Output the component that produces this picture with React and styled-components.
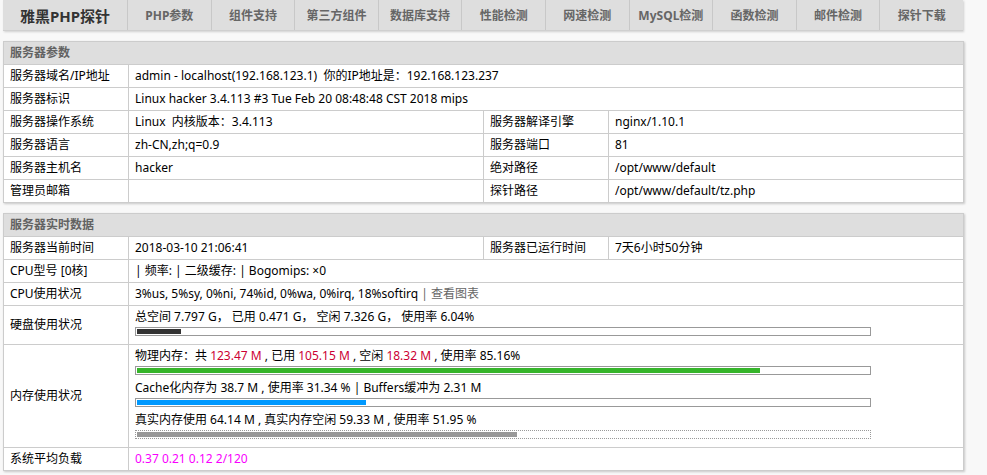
import React from 'react';
import styled, { createGlobalStyle } from 'styled-components';

const GlobalStyle = createGlobalStyle`
  html, body {
    margin: 0;
    padding: 0;
    background: #f8f8f8;
  }
  body {
    font-family: 'Noto Sans', 'Noto Sans CJK SC', sans-serif;
    font-size: 12px;
    color: #000;
  }
`;

const navItems = [
  'PHP参数',
  '组件支持',
  '第三方组件',
  '数据库支持',
  '性能检测',
  '网速检测',
  'MySQL检测',
  '函数检测',
  '邮件检测',
  '探针下载',
];

const Cols = () => (
  <colgroup>
    <Col $w="125px" />
    <Col $w="355px" />
    <Col $w="125px" />
    <Col $w="355px" />
  </colgroup>
);

const App = () => {
  return (
    <>
      <GlobalStyle />
      <Page>
        <Nav>
          <Brand>雅黑PHP探针</Brand>
          {navItems.map((item) => (
            <NavItem key={item}>{item}</NavItem>
          ))}
        </Nav>

        <Table>
          <Cols />
          <tbody>
            <tr>
              <Th colSpan={4}>服务器参数</Th>
            </tr>
            <tr>
              <Td>服务器域名/IP地址</Td>
              <Td colSpan={3}>admin - localhost(192.168.123.1)&nbsp;&nbsp;你的IP地址是：192.168.123.237</Td>
            </tr>
            <tr>
              <Td>服务器标识</Td>
              <Td colSpan={3}>Linux hacker 3.4.113 #3 Tue Feb 20 08:48:48 CST 2018 mips</Td>
            </tr>
            <tr>
              <Td>服务器操作系统</Td>
              <Td>Linux &nbsp;内核版本：3.4.113</Td>
              <Td>服务器解译引擎</Td>
              <Td>nginx/1.10.1</Td>
            </tr>
            <tr>
              <Td>服务器语言</Td>
              <Td>zh-CN,zh;q=0.9</Td>
              <Td>服务器端口</Td>
              <Td>81</Td>
            </tr>
            <tr>
              <Td>服务器主机名</Td>
              <Td>hacker</Td>
              <Td>绝对路径</Td>
              <Td>/opt/www/default</Td>
            </tr>
            <tr>
              <Td>管理员邮箱</Td>
              <Td></Td>
              <Td>探针路径</Td>
              <Td>/opt/www/default/tz.php</Td>
            </tr>
          </tbody>
        </Table>

        <Table>
          <Cols />
          <tbody>
            <tr>
              <Th colSpan={4}>服务器实时数据</Th>
            </tr>
            <tr>
              <Td>服务器当前时间</Td>
              <Td>2018-03-10 21:06:41</Td>
              <Td>服务器已运行时间</Td>
              <Td>7天6小时50分钟</Td>
            </tr>
            <tr>
              <Td>CPU型号 [0核]</Td>
              <Td colSpan={3}>| 频率: | 二级缓存: | Bogomips: ×0</Td>
            </tr>
            <tr>
              <Td>CPU使用状况</Td>
              <Td colSpan={3}>
                3%us, 5%sy, 0%ni, 74%id, 0%wa, 0%irq, 18%softirq <Muted>| 查看图表</Muted>
              </Td>
            </tr>
            <tr>
              <Td>硬盘使用状况</Td>
              <Td colSpan={3}>
                总空间 7.797 G，&nbsp;已用 0.471 G，&nbsp;空闲 7.326 G，&nbsp;使用率 6.04%
                <Bar>
                  <BarFill $color="#333" style={{ width: '6.04%' }} />
                </Bar>
              </Td>
            </tr>
            <tr>
              <Td>内存使用状况</Td>
              <Td colSpan={3}>
                物理内存：共 <Red>123.47 M</Red> , 已用 <Red>105.15 M</Red> , 空闲 <Red>18.32 M</Red> , 使用率 85.16%
                <Bar>
                  <BarFill $color="#36b52a" style={{ width: '85.16%' }} />
                </Bar>
                Cache化内存为 38.7 M , 使用率 31.34 % | Buffers缓冲为 2.31 M
                <Bar>
                  <BarFill $color="#0099ff" style={{ width: '31.34%' }} />
                </Bar>
                真实内存使用 64.14 M , 真实内存空闲 59.33 M , 使用率 51.95 %
                <Bar $dotted>
                  <BarFill $color="#999" style={{ width: '51.95%' }} />
                </Bar>
              </Td>
            </tr>
            <tr>
              <Td>系统平均负载</Td>
              <Td colSpan={3}>
                <Load>0.37 0.21 0.12 2/120</Load>
              </Td>
            </tr>
          </tbody>
        </Table>
      </Page>
    </>
  );
};

// Styled Components

const Page = styled.div`
  width: 960px;
  margin-left: 3px;
`;

const Nav = styled.div`
  display: flex;
  height: 30px;
  background: #dedede;
  border-bottom: 1px solid #cfcfcf;
  box-shadow: 1px 1px 2px #cfcfcf;
  margin-bottom: 10px;
`;

const Brand = styled.div`
  width: 124px;
  flex: none;
  display: flex;
  align-items: center;
  justify-content: center;
  font-size: 15px;
  font-weight: bold;
  color: #333;
`;

const NavItem = styled.div`
  flex: 1;
  display: flex;
  align-items: center;
  justify-content: center;
  border-left: 1px solid #c8c8c8;
  font-size: 12px;
  font-weight: bold;
  color: #666;
`;

const Table = styled.table`
  width: 100%;
  border-collapse: collapse;
  border-spacing: 0;
  margin: 0 0 10px;
  background: #fff;
  box-shadow: 1px 1px 2px #c8c8c8;
  table-layout: fixed;
`;

const Col = styled.col`
  width: ${(p) => p.$w};
`;

const Th = styled.th`
  padding: 3px 6px;
  line-height: 16px;
  font-weight: bold;
  background: #dedede;
  color: #626262;
  border: 1px solid #cccccc;
  text-align: left;
`;

const Td = styled.td`
  padding: 3px 6px;
  line-height: 16px;
  border: 1px solid #cccccc;
  vertical-align: middle;
  white-space: nowrap;
`;

const Muted = styled.span`
  color: #666;
`;

const Red = styled.span`
  color: #cc0033;
`;

const Load = styled.span`
  color: #f800fe;
`;

const Bar = styled.div`
  width: 89%;
  height: 5px;
  padding: 1px;
  margin: 2px 0 5px 0;
  background: #fff;
  border: 1px ${(p) => (p.$dotted ? 'dotted' : 'solid')} #999999;
  overflow: hidden;
`;

const BarFill = styled.div`
  height: 5px;
  background: ${(p) => p.$color};
`;

export default App;
